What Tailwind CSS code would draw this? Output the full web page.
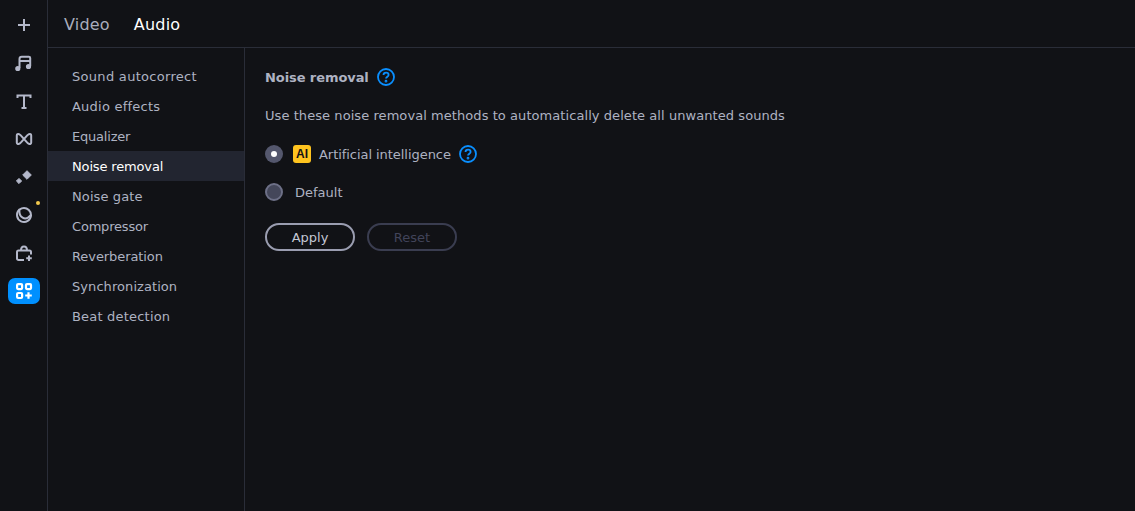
<!DOCTYPE html>
<html lang="en">
<head>
  <meta charset="UTF-8" />
  <title>Audio - Noise removal</title>
  <script src="https://cdn.jsdelivr.net/npm/@tailwindcss/browser@4"></script>
</head>
<body class="h-[511px] w-[1135px] overflow-hidden bg-[#111216] font-['DejaVu_Sans',sans-serif] text-[13px] text-[#aeb2c2]">
<div class="flex h-full">
  <!-- left toolbar -->
  <nav class="flex w-[48px] shrink-0 flex-col items-center border-r border-[#2a2d38] pl-[1px] pt-[6px] text-[#b4b8ca]">
    <div class="flex h-[38px] w-full items-center justify-center">
      <svg width="20" height="20" viewBox="0 0 20 20" fill="none" stroke="currentColor" stroke-width="2"><path d="M10 4v12M4 10h12"/></svg>
    </div>
    <div class="flex h-[38px] w-full items-center justify-center">
      <svg width="20" height="20" viewBox="0 0 20 20" fill="none" stroke="currentColor" stroke-width="2"><path d="M5.500 15V6c0-1.300 1-2.300 2.300-2.300h7c.8 0 1.400.6 1.400 1.400V13"/><path d="M5.500 8h10.500"/><circle cx="3.800" cy="15.500" r="1.600" fill="currentColor"/><circle cx="14.500" cy="13.500" r="1.600" fill="currentColor"/></svg>
    </div>
    <div class="flex h-[38px] w-full items-center justify-center">
      <svg width="20" height="20" viewBox="0 0 20 20" fill="none" stroke="currentColor" stroke-width="2"><path d="M3.500 7V4.500h13V7M10 4.500V17M7.500 17h5"/></svg>
    </div>
    <div class="flex h-[38px] w-full items-center justify-center">
      <svg width="20" height="20" viewBox="0 0 20 20" fill="none" stroke="currentColor" stroke-width="2"><path d="M2.800 6.500c0-1.300 1-1.800 2.300-1.300C7 6 8.500 8.500 10 10c1.500-1.500 3-4 4.900-4.800 1.300-.5 2.300 0 2.300 1.300v7c0 1.300-1 1.800-2.300 1.300C13 14 11.500 11.500 10 10c-1.500 1.500-3 4-4.900 4.800-1.300.5-2.300 0-2.300-1.300z" stroke-linejoin="round"/></svg>
    </div>
    <div class="flex h-[38px] w-full items-center justify-center">
      <svg width="20" height="20" viewBox="0 0 20 20" fill="currentColor" stroke="currentColor" stroke-width="1" stroke-linejoin="round"><path d="M13 3.700l4.300 4.300-4.300 4.300L8.700 8z"/><path d="M5 11.400l2.600 2.600L5 16.600 2.400 14z"/></svg>
    </div>
    <div class="relative flex h-[38px] w-full items-center justify-center">
      <svg width="20" height="20" viewBox="0 0 20 20" fill="none" stroke="currentColor" stroke-width="2" stroke-linejoin="round"><path d="M5.500 4.600A7 7 0 1 0 17 10"/><path d="M5.500 4.600C4.500 12 11 17 17 10 17 6 13.500 3 10 3 8.300 3 6.800 3.600 5.500 4.600z"/></svg>
      <span class="absolute top-[5px] left-[35px] h-[4px] w-[4px] rounded-full bg-[#f2c94c]"></span>
    </div>
    <div class="flex h-[38px] w-full items-center justify-center">
      <svg width="20" height="20" viewBox="0 0 20 20" fill="none" stroke="currentColor" stroke-width="2"><path d="M10 17H4.500C3.700 17 3 16.300 3 15.500V9c0-1 .7-1.500 1.500-1.500h11c.8 0 1.500.5 1.500 1.500v2.500"/><path d="M7 7.500C7 5 8.300 3.500 10 3.500S13 5 13 7.500"/><path d="M15 12.500V18M12.200 15.200h5.600"/></svg>
    </div>
    <div class="mt-[6px] flex h-[26px] w-[32px] items-center justify-center rounded-[7px] bg-[#0090ff] text-white">
      <svg width="18" height="18" viewBox="0 0 18 18" fill="none" stroke="currentColor" stroke-width="2.200"><rect x="2.100" y="2.100" width="5" height="5" rx="1"/><rect x="11" y="2.100" width="5" height="5" rx="1"/><rect x="2.100" y="11" width="5" height="5" rx="1"/><path d="M13.500 10.200v6.600M10.200 13.500h6.600"/></svg>
    </div>
  </nav>

  <div class="flex min-w-0 flex-1 flex-col">
    <!-- tabs -->
    <header class="flex h-[48px] shrink-0 items-center gap-[24px] border-b border-[#2a2d38] pl-[16px] pt-[2px] text-[16px] tracking-[0.2px]">
      <span class="text-[#a9adbd]">Video</span>
      <span class="text-white">Audio</span>
    </header>

    <div class="flex min-h-0 flex-1">
      <!-- section list -->
      <ul class="w-[197px] shrink-0 border-r border-[#2a2d38] pt-[13px]">
        <li class="flex h-[30px] items-center pl-[24px] pt-[2px] tracking-[0.3px]">Sound autocorrect</li>
        <li class="flex h-[30px] items-center pl-[24px] pt-[2px] tracking-[0.23px]">Audio effects</li>
        <li class="flex h-[30px] items-center pl-[24px] pt-[2px] tracking-[-0.2px]">Equalizer</li>
        <li class="flex h-[30px] items-center bg-[#222530] pl-[24px] pt-[2px] tracking-[-0.15px] text-white">Noise removal</li>
        <li class="flex h-[30px] items-center pl-[24px] pt-[2px] tracking-[0.1px]">Noise gate</li>
        <li class="flex h-[30px] items-center pl-[24px] pt-[2px] tracking-[-0.2px]">Compressor</li>
        <li class="flex h-[30px] items-center pl-[24px] pt-[2px] tracking-[-0.08px]">Reverberation</li>
        <li class="flex h-[30px] items-center pl-[24px] pt-[2px] tracking-[0.07px]">Synchronization</li>
        <li class="flex h-[30px] items-center pl-[24px] pt-[2px] tracking-[0.2px]">Beat detection</li>
      </ul>

      <!-- noise removal panel -->
      <main class="flex-1 pl-[20px] pt-[19px]">
        <div class="flex h-[20px] items-center gap-[8px]">
          <h2 class="pt-[2px] font-bold tracking-[-0.08px] text-[#aeb2c2]">Noise removal</h2>
          <svg width="18" height="18" viewBox="0 0 18 18" fill="none" stroke="#0a8fff" stroke-width="1.800"><circle cx="9" cy="9" r="8"/><path d="M6.500 7c0-1.500 1.100-2.400 2.600-2.400S11.600 5.500 11.600 6.900c0 1.700-2.600 1.900-2.600 3.700" /><circle cx="9" cy="13.200" r="0.500" fill="#0a8fff"/></svg>
        </div>
        <p class="mt-[18px] h-[20px] pt-[1px] leading-[20px] tracking-[0.067px]">Use these noise removal methods to automatically delete all unwanted sounds</p>
        <div class="mt-[19px] flex h-[20px] items-center">
          <span class="flex h-[18px] w-[18px] items-center justify-center rounded-full bg-[#54576d]"><span class="h-[6px] w-[6px] rounded-full bg-white"></span></span>
          <span class="ml-[10px] flex h-[18px] w-[18px] items-center justify-center rounded-[3px] bg-[#ffc41f] font-['Liberation_Sans',sans-serif] text-[12px] font-bold text-[#111216]">AI</span>
          <span class="ml-[8px] pt-[2px] tracking-[-0.05px]">Artificial intelligence</span>
          <svg class="ml-[8px]" width="18" height="18" viewBox="0 0 18 18" fill="none" stroke="#0a8fff" stroke-width="1.800"><circle cx="9" cy="9" r="8"/><path d="M6.500 7c0-1.500 1.100-2.400 2.600-2.400S11.600 5.500 11.600 6.900c0 1.700-2.600 1.900-2.600 3.700" /><circle cx="9" cy="13.200" r="0.500" fill="#0a8fff"/></svg>
        </div>
        <div class="mt-[18px] flex h-[20px] items-center">
          <span class="h-[18px] w-[18px] rounded-full border-2 border-[#6d7087] bg-[#44475a]"></span>
          <span class="ml-[12px] pt-[2px]">Default</span>
        </div>
        <div class="mt-[21px] flex gap-[12px]">
          <button class="h-[28px] w-[90px] rounded-full border-2 border-[#9a9db0] pt-[1px] text-[#c4c7d4]">Apply</button>
          <button class="h-[28px] w-[90px] rounded-full border-2 border-[#3a3d50] pt-[1px] text-[#41445a]">Reset</button>
        </div>
      </main>
    </div>
  </div>
</div>
</body>
</html>
